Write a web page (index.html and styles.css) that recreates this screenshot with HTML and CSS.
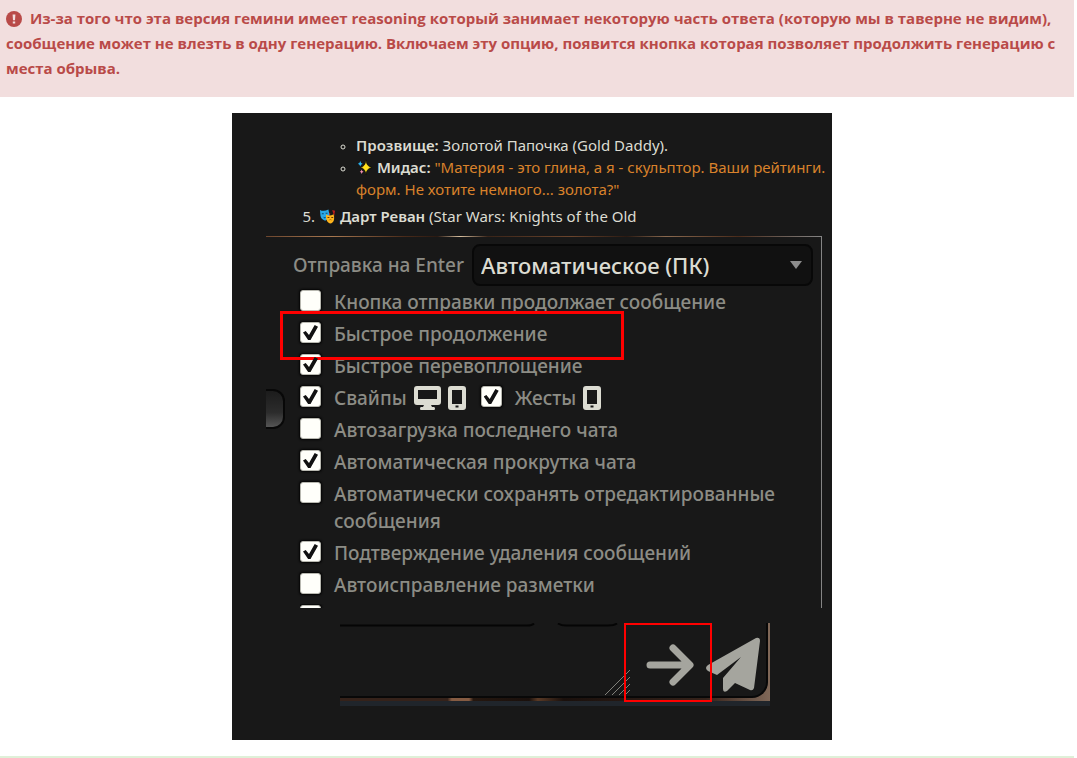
FILE: index.html
```html
<!DOCTYPE html>
<html lang="ru">
<head>
<meta charset="utf-8">
<title>Продолжение генерации</title>
<link rel="stylesheet" href="styles.css">
</head>
<body>
<main class="page">
  <p class="alert">
    <svg class="alert-icon" viewBox="0 0 16 16" aria-hidden="true"><circle cx="8" cy="8" r="8"/><path class="mark" d="M6.6 3.6h2.8L9 9.2H7zM6.8 10.4h2.4v2H6.8z"/></svg>
    Из-за того что эта версия гемини имеет reasoning который занимает некоторую часть ответа (которую мы в таверне не видим),<br>
    сообщение может не влезть в одну генерацию. Включаем эту опцию, появится кнопка которая позволяет продолжить генерацию с места обрыва.
  </p>

  <section class="shot">
    <ol class="chat">
      <li class="bare">
        <ul class="facts">
          <li><strong>Прозвище:</strong> Золотой Папочка (Gold Daddy).</li>
          <li>
            <svg class="emoji" viewBox="0 0 18 18" aria-hidden="true"><path fill="#ffe11c" stroke="#000" stroke-width=".6" d="M10.5 1Q11 8 17 9Q11 10 10.5 16.500Q10 10 4.500 9Q10 8 10.500 1z"/><path fill="#29b6f6" d="M4.500 2Q5 4.500 7 5Q5 5.500 4.500 8Q4 5.500 2 5Q4 4.500 4.500 2z"/><path fill="#f48fb1" d="M6 11Q6.300 13 8 13.500Q6.300 14 6 16Q5.700 14 4 13.500Q5.700 13 6 11z"/></svg>
            <strong>Мидас:</strong> <q class="speech">"Материя - это глина, а я - скульптор. Ваши рейтинги.<br>форм. Не хотите немного... золота?"</q>
          </li>
        </ul>
      </li>
      <li value="5"><svg class="emoji mask" viewBox="0 0 18 18" aria-hidden="true"><path fill="#b71c1c" d="M9 3l3 3-2 5zM14 2l3 1-1 6z"/><path fill="#29a9e8" d="M1 2q4 2 9-.5l1 6Q10 12 6.500 13.500Q2 12 1.500 8z"/><path fill="#0b4770" d="M3 5.500h2v1H3zM7 5h2v1H7zM4 9q2 1.500 4 0l-2 2z"/><path fill="#ffb51c" d="M7.500 7q4 2 8-.5 1.500 6-1 8.500-2 2-4 1Q7 14 7.500 7z"/><path fill="#6b3a00" d="M9 9.500h2v1H9zM13 9.500h2v1h-2zM10 13q2-1.500 4 0l-2-.2z"/></svg> <strong>Дарт Реван</strong> (Star Wars: Knights of the Old</li>
    </ol>

    <form class="settings">
      <span class="handle"></span>
      <div class="send-mode">
        <label for="mode">Отправка на Enter</label>
        <span class="select-wrap">
          <select id="mode"><option>Автоматическое (ПК)</option></select>
          <svg class="caret" viewBox="0 0 12 8" aria-hidden="true"><path d="M0 0h12L6 8z"/></svg>
        </span>
      </div>
      <div class="options">
        <label class="option"><input type="checkbox">Кнопка отправки продолжает сообщение</label>
        <div class="row">
          <label class="option"><input type="checkbox" checked>Быстрое продолжение</label>
          <span class="highlight"></span>
        </div>
        <label class="option"><input type="checkbox" checked>Быстрое перевоплощение</label>
        <div class="row pair">
          <label class="option"><input type="checkbox" checked>Свайпы
            <span class="devices">
              <svg class="desktop" viewBox="0 0 27 24" aria-hidden="true"><path fill-rule="evenodd" d="M3 0h21q3 0 3 3v13q0 3-3 3h-7l1 2h2q1 0 1 1.500T20 24H7q-1 0-1-1.500T7 21h2l1-2H3q-3 0-3-3V3q0-3 3-3zM4 4v9h19V4z"/></svg>
              <svg class="phone" viewBox="0 0 18 24" aria-hidden="true"><path fill-rule="evenodd" d="M3 0h12q3 0 3 3v18q0 3-3 3H3q-3 0-3-3V3q0-3 3-3zM4 4v14h10V4zM7.500 19.500v2h3v-2z"/></svg>
            </span>
          </label>
          <label class="option"><input type="checkbox" checked>Жесты
            <span class="devices">
              <svg class="phone" viewBox="0 0 18 24" aria-hidden="true"><path fill-rule="evenodd" d="M3 0h12q3 0 3 3v18q0 3-3 3H3q-3 0-3-3V3q0-3 3-3zM4 4v14h10V4zM7.500 19.500v2h3v-2z"/></svg>
            </span>
          </label>
        </div>
        <label class="option"><input type="checkbox">Автозагрузка последнего чата</label>
        <label class="option"><input type="checkbox" checked>Автоматическая прокрутка чата</label>
        <label class="option"><input type="checkbox">Автоматически сохранять отредактированные сообщения</label>
        <label class="option"><input type="checkbox" checked>Подтверждение удаления сообщений</label>
        <label class="option"><input type="checkbox">Автоисправление разметки</label>
        <div class="option cut"><input type="checkbox" aria-label="Следующая настройка"></div>
      </div>
    </form>

    <div class="composer">
      <svg class="seam" viewBox="0 0 280 4" aria-hidden="true"><path d="M0 2.500h187q5 0 7-2M218 .5q3 2 8 2h42q6 0 9-2"/></svg>
      <div class="bar">
        <svg class="grip" viewBox="0 0 26 26" aria-hidden="true"><path d="M1 25L26 0M8 25L26 7M15 25l11-11M21 25l5-5"/></svg>
        <button type="button" class="continue" aria-label="Продолжить"><svg viewBox="0 0 48 42" aria-hidden="true"><path d="M4 21h39M27 4l17 17-17 17"/></svg></button>
        <button type="button" class="send" aria-label="Отправить"><svg viewBox="0 0 54 56" aria-hidden="true"><path d="M50 1q4-1 4 3l-6 47q-1 3-4 2L29 46l-8 8q-4 2-4-2V41L35 20 11 38 2 34q-4-3 0-6z"/></svg></button>
      </div>
    </div>
  </section>
  <div class="next-block"></div>
</main>
</body>
</html>
```
FILE: styles.css
```css
* { box-sizing: border-box; }
body { margin: 0; background: #fff; font-family: "Noto Sans", "Open Sans", sans-serif; }
.page { margin-right: 3px; }

.alert {
  margin: 0;
  padding: 6px 6px 16px;
  background: #f2dede;
  color: #b94a48;
  font: 700 15px/25px "Open Sans", "Noto Sans", sans-serif;
}
.alert-icon { width: 16px; height: 16px; margin-right: 4px; vertical-align: -3px; fill: #b94a48; }
.alert-icon .mark { fill: #f2dede; }

.shot {
  width: 600px;
  max-width: 100%;
  margin: 16px auto;
  padding: 21px 0 34px;
  background: #181818;
  position: relative;
  right: 5px;
}

.chat { margin: 0; padding: 0 0 0 87px; color: #dcdcd2; font-size: 15px; line-height: 22px; white-space: nowrap; }
.chat strong { font-weight: 600; }
.chat .bare { list-style: none; }
.facts { margin: 0 0 5px; padding-left: 37px; list-style: circle; }
.facts li::marker { font-size: 11px; }
.speech { quotes: none; color: #d9822b; }
.emoji { width: 17px; height: 17px; vertical-align: -3px; }

.settings {
  position: relative;
  margin: 9px 10px 0 34px;
  padding: 7px 8px 0 27px;
  border-top: 1px solid;
  border-right: 1px solid #858585;
  border-image: linear-gradient(90deg, #6b452d, #a87850 12%, #4a2b1a 25%, #2b1a12 31%, #d8c0a0 35%, #3a2418 40%, #6b452d 55%, #2b1a12 65%, #8a6a50 72%, #4a2b1a 85%, #858585) 1;
  color: #8c8c85;
  font-size: 19px;
  font-weight: 500;
  line-height: 27px;
}
.handle {
  position: absolute;
  left: 0;
  top: 152px;
  width: 19px;
  height: 40px;
  border: 2px solid #080808;
  border-left: 0;
  border-radius: 0 12px 12px 0;
  background: linear-gradient(#1c1c1c, #2c2c2c 60%, #555);
}
.send-mode { display: flex; align-items: center; gap: 8px; }
.select-wrap { flex: 1; display: grid; align-items: center; }
.select-wrap > * { grid-area: 1 / 1; }
.select-wrap select {
  appearance: none;
  width: 100%;
  height: 42px;
  padding: 0 7px;
  border: 2px solid #080808;
  border-radius: 8px;
  background: #111;
  color: #dcdcd2;
  font: 500 22px "Noto Sans", sans-serif;
}
.caret { width: 12px; height: 8px; margin-right: 11px; justify-self: end; fill: #8c8c8c; pointer-events: none; }

.options { display: grid; gap: 5px; margin-top: 3px; padding-left: 7px; }
.option { display: flex; align-items: flex-start; gap: 13px; }
.option input {
  appearance: none;
  flex: none;
  width: 21px;
  height: 21px;
  margin: 1px 0 0;
  border: 1px solid #b8b8b0;
  border-radius: 3px;
  background: #fffffa;
  box-shadow: 0 0 2px 1px #050505;
}
.option input:checked::before {
  content: "";
  display: block;
  width: 15px;
  height: 15px;
  margin: 2px;
  background: #111;
  clip-path: polygon(0 50%, 18% 40%, 40% 66%, 78% 0, 100% 12%, 50% 100%, 34% 100%);
}
.row { position: relative; }
.pair { display: flex; gap: 15px; }
.devices { display: inline-flex; gap: 7px; margin-left: -6px; padding-top: 1px; fill: #dcdcd2; }
.desktop { width: 27px; height: 24px; }
.phone { width: 18px; height: 24px; }
.highlight { position: absolute; left: -20px; top: -10px; width: 344px; height: 49px; border: 3px solid #f00; }
.cut { height: 4px; overflow: hidden; }

.composer {
  position: relative;
  margin: 15px 62px 0 108px;
  padding-bottom: 8px;
  background: linear-gradient(0deg, #20252b 5px, transparent 5px), linear-gradient(90deg, #35221a 25%, #855b42 26%, #855b42 30%, #25170f 31%, #1a100c 44%, #5a3a26 46%, #1a100c 52%, #35221a 85%, #806858);
}
.seam { position: absolute; left: 0; top: 0; width: 280px; height: 4px; z-index: 1; fill: none; stroke: #050505; stroke-width: 2; }
.bar {
  display: flex;
  justify-content: flex-end;
  align-items: flex-end;
  height: 75px;
  margin-right: 2px;
  border: solid #080808;
  border-width: 0 2px 2px 0;
  border-radius: 0 0 16px 0;
  background: #181818;
}
.bar button { padding: 0; background: none; cursor: pointer; }
.grip { width: 26px; height: 26px; margin-right: -6px; fill: none; stroke: #80807a; stroke-width: 1; }
.continue { display: grid; place-items: center; width: 88px; height: 79px; margin-bottom: -6px; border: 2px solid #f00; z-index: 1; }
.bar .continue { padding-top: 4px; }
.continue svg { width: 48px; height: 42px; margin-left: 4px; fill: none; stroke: #a5a59e; stroke-width: 7; stroke-linecap: round; stroke-linejoin: round; }
.send { width: 54px; height: 56px; margin: 0 6px 3px -6px; border: 0; }
.send svg { display: block; width: 54px; height: 56px; fill: #a5a59e; }
.next-block { height: 2px; background: #dff0d8; }
```
